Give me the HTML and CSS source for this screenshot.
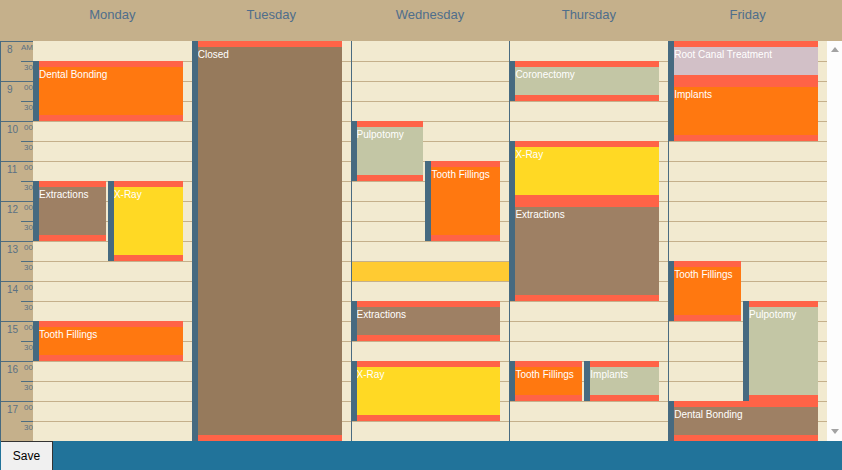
FILE: index.html
```html
<!DOCTYPE html>
<html>
<head>
<meta charset="utf-8">
<title>Scheduler</title>
<link rel="stylesheet" href="styles.css">
</head>
<body>
<div class="app">
  <div class="head">
    <div class="corner"></div>
    <div class="day-name">Monday</div>
    <div class="day-name">Tuesday</div>
    <div class="day-name">Wednesday</div>
    <div class="day-name">Thursday</div>
    <div class="day-name">Friday</div>
    <div class="corner"></div>
  </div>
  <div class="body">
    <div class="times">
      <div class="hour"><div class="hour-num">8</div><div class="mins"><div class="min">AM</div><div class="min half">30</div></div></div>
      <div class="hour"><div class="hour-num">9</div><div class="mins"><div class="min">00</div><div class="min half">30</div></div></div>
      <div class="hour"><div class="hour-num">10</div><div class="mins"><div class="min">00</div><div class="min half">30</div></div></div>
      <div class="hour"><div class="hour-num">11</div><div class="mins"><div class="min">00</div><div class="min half">30</div></div></div>
      <div class="hour"><div class="hour-num">12</div><div class="mins"><div class="min">00</div><div class="min half">30</div></div></div>
      <div class="hour"><div class="hour-num">13</div><div class="mins"><div class="min">00</div><div class="min half">30</div></div></div>
      <div class="hour"><div class="hour-num">14</div><div class="mins"><div class="min">00</div><div class="min half">30</div></div></div>
      <div class="hour"><div class="hour-num">15</div><div class="mins"><div class="min">00</div><div class="min half">30</div></div></div>
      <div class="hour"><div class="hour-num">16</div><div class="mins"><div class="min">00</div><div class="min half">30</div></div></div>
      <div class="hour"><div class="hour-num">17</div><div class="mins"><div class="min">00</div><div class="min half">30</div></div></div>
    </div>
    <div class="days">
      <div class="day">
        <div class="ev full orange" style="grid-row: 2 / span 3">Dental Bonding</div>
        <div class="ev l1 brown" style="grid-row: 8 / span 3">Extractions</div>
        <div class="ev l2 yellow" style="grid-row: 8 / span 4">X-Ray</div>
        <div class="ev full orange" style="grid-row: 15 / span 2">Tooth Fillings</div>
      </div>
      <div class="day">
        <div class="ev full closed" style="grid-row: 1 / span 20">Closed</div>
      </div>
      <div class="day">
        <div class="ev l1 sage" style="grid-row: 5 / span 3">Pulpotomy</div>
        <div class="ev l2 orange" style="grid-row: 7 / span 4">Tooth Fillings</div>
        <div class="mark" style="grid-row: 12 / span 1"></div>
        <div class="ev full brown" style="grid-row: 14 / span 2">Extractions</div>
        <div class="ev full yellow" style="grid-row: 17 / span 3">X-Ray</div>
      </div>
      <div class="day">
        <div class="ev full sage" style="grid-row: 2 / span 2">Coronectomy</div>
        <div class="ev full yellow" style="grid-row: 6 / span 3">X-Ray</div>
        <div class="ev full brown" style="grid-row: 9 / span 5">Extractions</div>
        <div class="ev l1 orange" style="grid-row: 17 / span 2">Tooth Fillings</div>
        <div class="ev l2 sage" style="grid-row: 17 / span 2">Implants</div>
      </div>
      <div class="day">
        <div class="ev full pink" style="grid-row: 1 / span 2">Root Canal Treatment</div>
        <div class="ev full orange" style="grid-row: 3 / span 3">Implants</div>
        <div class="ev l1 orange" style="grid-row: 12 / span 3">Tooth Fillings</div>
        <div class="ev l2 sage" style="grid-row: 14 / span 5">Pulpotomy</div>
        <div class="ev full brown" style="grid-row: 19 / span 2">Dental Bonding</div>
      </div>
    </div>
    <div class="scroll">
      <div class="arrow up"></div>
      <div class="arrow down"></div>
    </div>
  </div>
  <div class="foot">
    <button class="save" type="button">Save</button>
  </div>
</div>
</body>
</html>
```

FILE: styles.css
```css
* {
  box-sizing: border-box;
}

html, body {
  margin: 0;
  padding: 0;
}

body {
  width: 842px;
  height: 470px;
  overflow: hidden;
  font-family: "Liberation Sans", Arial, sans-serif;
  background: #f2ead0;
}

.app {
  display: flex;
  flex-direction: column;
  height: 470px;
}

/* header */
.head {
  display: grid;
  grid-template-columns: 33px repeat(5, 1fr) 15px;
  height: 41px;
  background: #c5b08b;
}

.day-name {
  text-align: center;
  font-size: 13px;
  line-height: 15px;
  padding-top: 7px;
  color: #4f6e8b;
}

/* body */
.body {
  display: flex;
  height: 400px;
}

.times {
  width: 33px;
  border-left: 1px solid #476a80;
  background: #c5b08b;
}

.hour {
  display: flex;
  height: 40px;
  border-top: 1px solid #4e6c80;
}

.hour-num {
  flex: 1;
  padding-left: 6px;
  padding-top: 2px;
  font-size: 10px;
  line-height: 12px;
  color: #5b7184;
}

.mins {
  width: 12px;
  display: flex;
  flex-direction: column;
}

.min {
  height: 19px;
  padding-top: 1px;
  font-size: 8px;
  line-height: 10px;
  text-align: right;
  white-space: nowrap;
  color: #5b7184;
}

.min.half {
  height: 20px;
  border-top: 1px solid #4e6c80;
}

.days {
  flex: 1;
  display: grid;
  grid-template-columns: repeat(5, 1fr);
}

.day {
  display: grid;
  grid-template-columns: 1fr 1fr 9px;
  grid-template-rows: repeat(20, 20px);
  background:
    linear-gradient(#f2ead0, #f2ead0) 0 0 / 100% 1px no-repeat,
    repeating-linear-gradient(#c5b08b 0 1px, #f2ead0 1px 20px);
}

.day + .day {
  background:
    linear-gradient(#4a6b80, #4a6b80) 0 0 / 1px 100% no-repeat,
    linear-gradient(#f2ead0, #f2ead0) 0 0 / 100% 1px no-repeat,
    repeating-linear-gradient(#c5b08b 0 1px, #f2ead0 1px 20px);
}

/* events */
.ev {
  border-left: 6px solid #466a80;
  box-shadow: inset 0 6px 0 #ff6347, inset 0 -6px 0 #ff6347;
  color: #ffffff;
  font-size: 10px;
  line-height: 12px;
  padding-top: 8px;
  overflow: hidden;
  white-space: nowrap;
}

.ev.full {
  grid-column: 1 / 3;
}

.ev.l1 {
  grid-column: 1;
  margin-right: 2px;
}

.ev.l2 {
  grid-column: 2;
}

.orange { background: #ff7810; }
.yellow { background: #ffd924; }
.brown { background: #9e8064; }
.closed { background: #967a5c; }
.sage { background: #c3c6a5; }
.pink { background: #d2c0c7; }

.mark {
  grid-column: 1 / -1;
  margin: 1px 0 0 1px;
  background: #ffcb32;
}

/* scrollbar */
.scroll {
  width: 15px;
  background: #fdfdfd;
  display: flex;
  flex-direction: column;
  justify-content: space-between;
  align-items: center;
  padding: 6px 0 7px;
}

.arrow {
  width: 0;
  height: 0;
  border-left: 4.5px solid transparent;
  border-right: 4.5px solid transparent;
}

.arrow.up {
  border-bottom: 5px solid #a3a3a3;
}

.arrow.down {
  border-top: 5px solid #a3a3a3;
}

/* footer */
.foot {
  height: 29px;
  background: #21739a;
  display: flex;
}

.save {
  margin: 0 0 0 1px;
  width: 52px;
  height: 29px;
  padding: 0;
  border: 0;
  border-top: 1px solid #333333;
  border-right: 1px solid #333333;
  background: #f0f0f0;
  color: #000000;
  font-family: "Liberation Sans", Arial, sans-serif;
  font-size: 12px;
  line-height: 14px;
}
```
